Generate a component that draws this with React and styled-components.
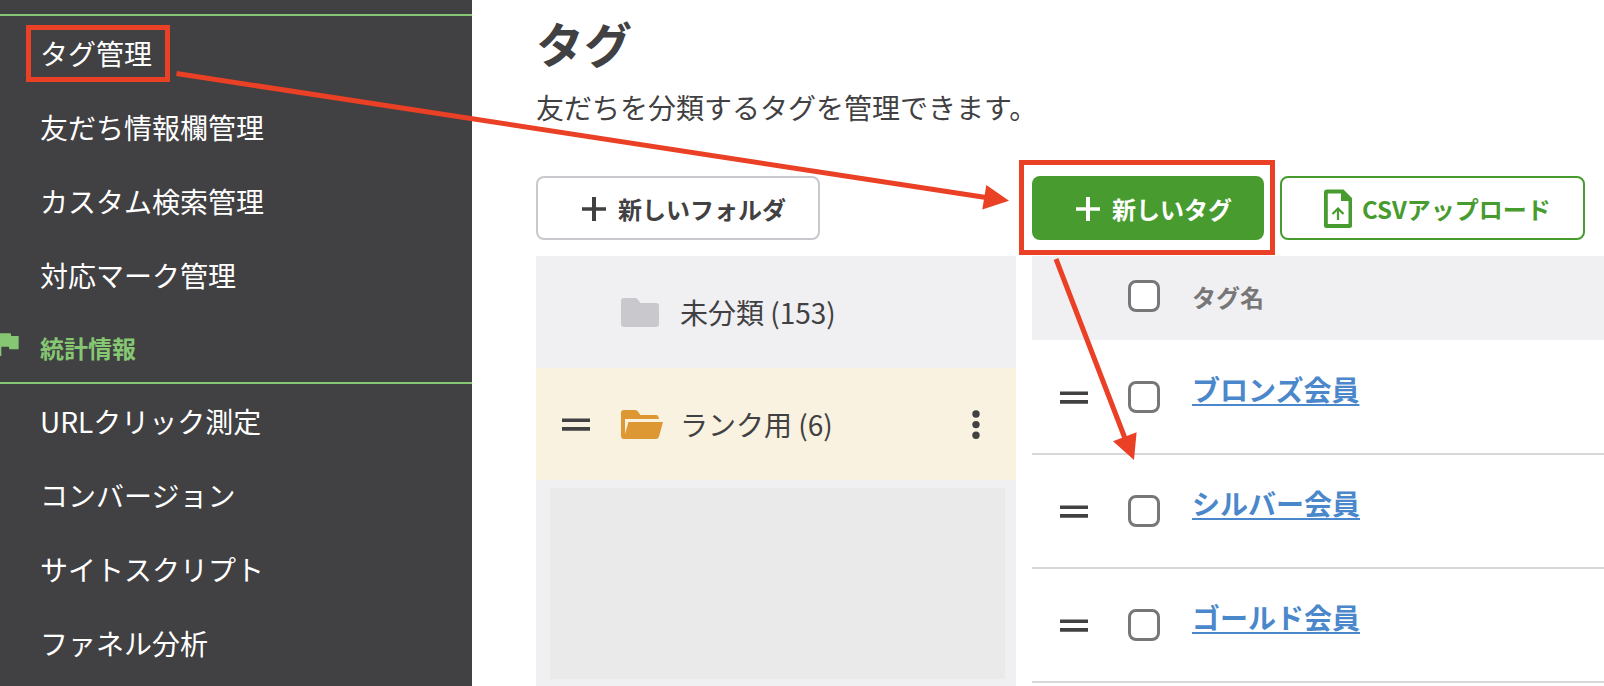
import React from 'react';
import styled, { createGlobalStyle } from 'styled-components';

const GlobalStyle = createGlobalStyle`
  * {
    box-sizing: border-box;
  }

  body {
    margin: 0;
    background: #fff;
    color: #414042;
    font-family: 'Noto Sans CJK JP', 'Noto Sans', sans-serif;
    font-size: 28px;
  }

  button {
    font-family: inherit;
    color: inherit;
    cursor: pointer;
  }
`;

const Page = styled.div`
  position: relative;
  display: flex;
  min-height: 100vh;
  overflow: hidden;
`;

// Sidebar
const Sidebar = styled.nav`
  flex: 0 0 472px;
  padding-top: 14px;
  background: #414042;
`;

const MenuList = styled.ul`
  margin: 0;
  padding: 0;
  border-top: 2px solid #85c772;
  list-style: none;
`;

const MenuItem = styled.li`
  display: flex;
  align-items: center;
  height: 74px;
  padding-left: 40px;
`;

const MenuLink = styled.a`
  position: relative;
  color: #fff;
  line-height: 40px;
  text-decoration: none;
`;

const MenuHeading = styled.h2`
  display: flex;
  align-items: center;
  gap: 16px;
  height: 70px;
  margin: 0 0 0 -8px;
  color: #85c772;
  font-size: 24px;
  font-weight: 700;

  svg {
    margin-bottom: 6px;
  }
`;

// Main area
const Main = styled.main`
  flex: 1;
  display: flex;
  flex-direction: column;
  min-width: 0;
  padding: 10px 0 0 64px;
`;

const Title = styled.h1`
  margin: 0;
  font-size: 48px;
  font-weight: 700;
  line-height: 64px;
`;

const Lead = styled.p`
  margin: 13px 0 49px;
  line-height: 40px;
`;

const Columns = styled.div`
  flex: 1;
  display: grid;
  grid-template-columns: 480px minmax(0, 1fr);
  gap: 16px;
`;

const Column = styled.section`
  display: flex;
  flex-direction: column;
  align-items: stretch;
  gap: 16px;
`;

const Toolbar = styled.div`
  display: flex;
  gap: 16px;
`;

const Button = styled.button`
  position: relative;
  display: flex;
  align-items: center;
  gap: 8px;
  height: 64px;
  padding: 0 32px 0 40px;
  border: ${({ $border }) => ($border ? `2px solid ${$border}` : 'none')};
  border-radius: 8px;
  background: ${({ $background }) => $background || '#fff'};
  color: ${({ $color }) => $color || '#414042'};
  font-size: 24px;
  font-weight: 700;
  white-space: nowrap;
`;

const IconButton = styled.button`
  display: flex;
  align-items: center;
  justify-content: center;
  padding: 0;
  border: none;
  background: none;
`;

const FolderPanel = styled.div`
  flex: 1;
  display: flex;
  flex-direction: column;
  background: #f0f0f3;
`;

const FolderRow = styled.div`
  display: grid;
  grid-template-columns: 28px 1fr 32px;
  align-items: center;
  column-gap: 30px;
  height: 112px;
  padding: 0 24px 0 26px;
  background: ${({ $active }) => ($active ? '#faf2e0' : 'transparent')};
`;

const FolderName = styled.button`
  grid-column: 2;
  display: flex;
  align-items: center;
  gap: 16px;
  padding: 0;
  border: none;
  background: none;
  font-size: 28px;
  line-height: 40px;
`;

const FolderBlank = styled.div`
  flex: 1;
  margin: 8px 11px 7px 14px;
  background: #eaeaea;
`;

const Table = styled.table`
  width: 100%;
  border-collapse: separate;
  border-spacing: 0;
  table-layout: fixed;
`;

const HeadCell = styled.th`
  width: ${({ $width }) => $width || 'auto'};
  height: 85px;
  padding: 0 0 4px;
  border-bottom: 1px solid #fff;
  background: #f0f0f3;
  color: #777;
  font-size: 24px;
  font-weight: 700;
  text-align: left;
`;

const Cell = styled.td`
  height: 114px;
  padding: 0 0 ${({ $name }) => ($name ? '16px' : '0')};
  border-bottom: 2px solid #d8d8d8;

  ${IconButton} {
    margin-left: 28px;
  }
`;

const Checkbox = styled.input`
  appearance: none;
  display: block;
  width: 32px;
  height: 32px;
  margin: 0;
  border: 3px solid #777;
  border-radius: 8px;
  background: #fff;
`;

const TagLink = styled.a`
  color: #4b87cb;
  font-weight: 700;
  line-height: 40px;
  text-decoration: underline;
  text-decoration-thickness: 2px;
  text-underline-offset: 3px;
`;

// Red guide marks drawn over the screen
const Highlight = styled.span`
  position: absolute;
  inset: ${({ $inset }) => $inset};
  border: 5px solid #ea4025;
  pointer-events: none;
`;

const Arrows = styled.svg`
  position: absolute;
  top: 0;
  left: 0;
  pointer-events: none;
`;

const FlagIcon = () => (
  <svg width="32" height="32" viewBox="0 0 24 24" fill="currentColor" aria-hidden="true">
    <path d="M14.4 6 14 4H5v17h2v-7h5.6l.4 2h7V6z" />
  </svg>
);

const PlusIcon = () => (
  <svg width="32" height="32" fill="currentColor" aria-hidden="true">
    <path d="M14 5h4v10.200h10v3.600H18V29h-4V18.800H4v-3.600h10z" />
  </svg>
);

const UploadFileIcon = () => (
  <svg width="32" height="40" fill="none" stroke="currentColor" aria-hidden="true">
    <path
      fill="currentColor"
      stroke="none"
      fillRule="evenodd"
      d="M5 1.500h16.500L30 10v27.500a2.500 2.500 0 0 1-2.500 2.500h-23A2.500 2.500 0 0 1 2 37.500v-33a3 3 0 0 1 3-3zM5.800 5.500V36h20.700V13H19V5.500z"
    />
    <path strokeWidth="2.200" d="M16 32V20.500M10.500 26 16 20.500l5.500 5.500" />
  </svg>
);

const HandleIcon = () => (
  <svg width="28" height="14" fill="#414042" aria-hidden="true">
    <path d="M0 1.500h28V5H0zM0 10h28v3.700H0z" />
  </svg>
);

const KebabIcon = () => (
  <svg width="32" height="32" fill="#414042" aria-hidden="true">
    <circle cx="16" cy="6" r="3.700" />
    <circle cx="16" cy="16.600" r="3.700" />
    <circle cx="16" cy="27.200" r="3.700" />
  </svg>
);

const FolderIcon = () => (
  <svg width="44" height="30" viewBox="0 -1 44 30" fill="#c9c8cd" aria-hidden="true">
    <path d="M4 0h11q1.500 0 2.500 1l3 4H36q3 0 3 3v18q0 3-3 3H4q-3 0-3-3V3q0-3 3-3z" />
  </svg>
);

const FolderOpenIcon = () => (
  <svg width="44" height="30" viewBox="0 -1 44 30" fill="#dd9733" aria-hidden="true">
    <path d="M4 0h11q1.500 0 2.500 1l3 4H36q2.500 0 3 4H5v15l3.500-12H43l-4 14.500q-.8 2.500-3 2.500H4q-3 0-3-3V3q0-3 3-3z" />
  </svg>
);

const settingItems = ['タグ管理', '友だち情報欄管理', 'カスタム検索管理', '対応マーク管理'];
const statsItems = ['URLクリック測定', 'コンバージョン', 'サイトスクリプト', 'ファネル分析'];
const tags = ['ブロンズ会員', 'シルバー会員', 'ゴールド会員'];

const Menu = ({ items, marked }) => (
  <MenuList>
    {items.map((item) => (
      <MenuItem key={item}>
        <MenuLink href="#">
          {item}
          {item === marked && <Highlight $inset="-8px -18px -9px -14px" />}
        </MenuLink>
      </MenuItem>
    ))}
  </MenuList>
);

const TagTable = () => (
  <Table>
    <thead>
      <tr>
        <HeadCell $width="96px" />
        <HeadCell $width="64px">
          <Checkbox type="checkbox" aria-label="すべて選択" />
        </HeadCell>
        <HeadCell>タグ名</HeadCell>
      </tr>
    </thead>
    <tbody>
      {tags.map((tag) => (
        <tr key={tag}>
          <Cell>
            <IconButton type="button" aria-label="並び替え">
              <HandleIcon />
            </IconButton>
          </Cell>
          <Cell>
            <Checkbox type="checkbox" aria-label={tag} />
          </Cell>
          <Cell $name>
            <TagLink href="#">{tag}</TagLink>
          </Cell>
        </tr>
      ))}
    </tbody>
  </Table>
);

const App = () => {
  return (
    <Page>
      <GlobalStyle />
      <Sidebar>
        <Menu items={settingItems} marked="タグ管理" />
        <MenuHeading>
          <FlagIcon />
          統計情報
        </MenuHeading>
        <Menu items={statsItems} />
      </Sidebar>

      <Main>
        <Title>タグ</Title>
        <Lead>友だちを分類するタグを管理できます。</Lead>
        <Columns>
          <Column>
            <Toolbar>
              <Button type="button" $border="#c9c8cd">
                <PlusIcon />
                新しいフォルダ
              </Button>
            </Toolbar>
            <FolderPanel>
              <FolderRow>
                <FolderName type="button">
                  <FolderIcon />
                  未分類 (153)
                </FolderName>
              </FolderRow>
              <FolderRow $active>
                <IconButton type="button" aria-label="並び替え">
                  <HandleIcon />
                </IconButton>
                <FolderName type="button">
                  <FolderOpenIcon />
                  ランク用 (6)
                </FolderName>
                <IconButton type="button" aria-label="メニュー">
                  <KebabIcon />
                </IconButton>
              </FolderRow>
              <FolderBlank />
            </FolderPanel>
          </Column>

          <Column>
            <Toolbar>
              <Button type="button" $background="#489b2e" $color="#fff">
                <PlusIcon />
                新しいタグ
                <Highlight $inset="-16px -11px -15px -13px" />
              </Button>
              <Button type="button" $border="#489b2e" $color="#489b2e">
                <UploadFileIcon />
                CSVアップロード
              </Button>
            </Toolbar>
            <TagTable />
          </Column>
        </Columns>
      </Main>

      <Arrows width="1200" height="480" fill="#ea4025" stroke="none" aria-hidden="true">
        <path stroke="#ea4025" strokeWidth="5" d="M176.500 73.500 986 197.500M1056 259l70 182" />
        <path d="M1009 200.700 986.300 185l-4 24.500zM1134 460l2.600-27.700-23.600 9z" />
      </Arrows>
    </Page>
  );
};

export default App;
